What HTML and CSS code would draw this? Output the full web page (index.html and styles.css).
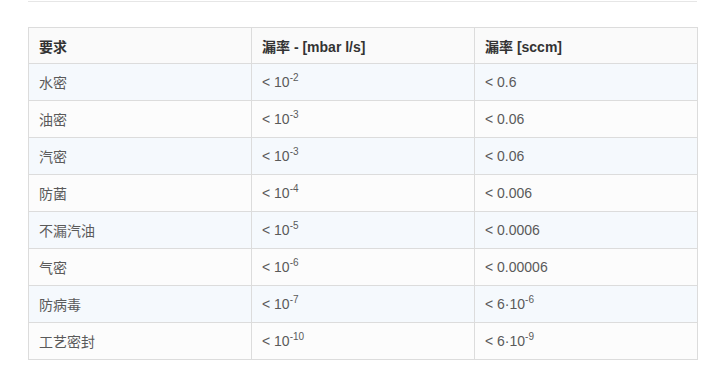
FILE: index.html
```html
<!DOCTYPE html>
<html lang="zh">
<head>
<meta charset="utf-8">
<link rel="stylesheet" href="styles.css">
</head>
<body>
<div class="page">
  <div class="rule"></div>
  <table class="leak">
    <thead>
      <tr><th>要求</th><th>漏率 - [mbar l/s]</th><th>漏率 [sccm]</th></tr>
    </thead>
    <tbody>
      <tr><td>水密</td><td>&lt; 10<sup>-2</sup></td><td>&lt; 0.6</td></tr>
      <tr><td>油密</td><td>&lt; 10<sup>-3</sup></td><td>&lt; 0.06</td></tr>
      <tr><td>汽密</td><td>&lt; 10<sup>-3</sup></td><td>&lt; 0.06</td></tr>
      <tr><td>防菌</td><td>&lt; 10<sup>-4</sup></td><td>&lt; 0.006</td></tr>
      <tr><td>不漏汽油</td><td>&lt; 10<sup>-5</sup></td><td>&lt; 0.0006</td></tr>
      <tr><td>气密</td><td>&lt; 10<sup>-6</sup></td><td>&lt; 0.00006</td></tr>
      <tr><td>防病毒</td><td>&lt; 10<sup>-7</sup></td><td>&lt; 6·10<sup>-6</sup></td></tr>
      <tr><td>工艺密封</td><td>&lt; 10<sup>-10</sup></td><td>&lt; 6·10<sup>-9</sup></td></tr>
    </tbody>
  </table>
</div>
</body>
</html>
```

FILE: styles.css
```css
html, body {
  margin: 0;
  padding: 0;
  background: #fff;
}
body {
  font-family: "Liberation Sans", Arial, "Noto Sans CJK SC", sans-serif;
  font-size: 14px;
  color: #5a5a5a;
}
.page {
  padding: 1px 27px 0 28px;
}
.rule {
  height: 1px;
  background: #e6e6e6;
}
.leak {
  margin-top: 25px;
  width: 670px;
  border-collapse: collapse;
  table-layout: fixed;
  border: 1px solid #dcdcdc;
}
.leak th, .leak td {
  border: 1px solid #dcdcdc;
  text-align: left;
  padding: 0 10px;
  height: 36px;
  vertical-align: middle;
}
.leak th {
  height: 35px;
  font-weight: bold;
  color: #333;
  background: #fafafa;
}
.leak tbody tr:nth-child(odd) td {
  background: #f5f9fd;
}
.leak tbody tr:nth-child(even) td {
  background: #fcfcfc;
}
.leak sup {
  font-size: 10px;
  line-height: 0;
  vertical-align: 6px;
}
```
